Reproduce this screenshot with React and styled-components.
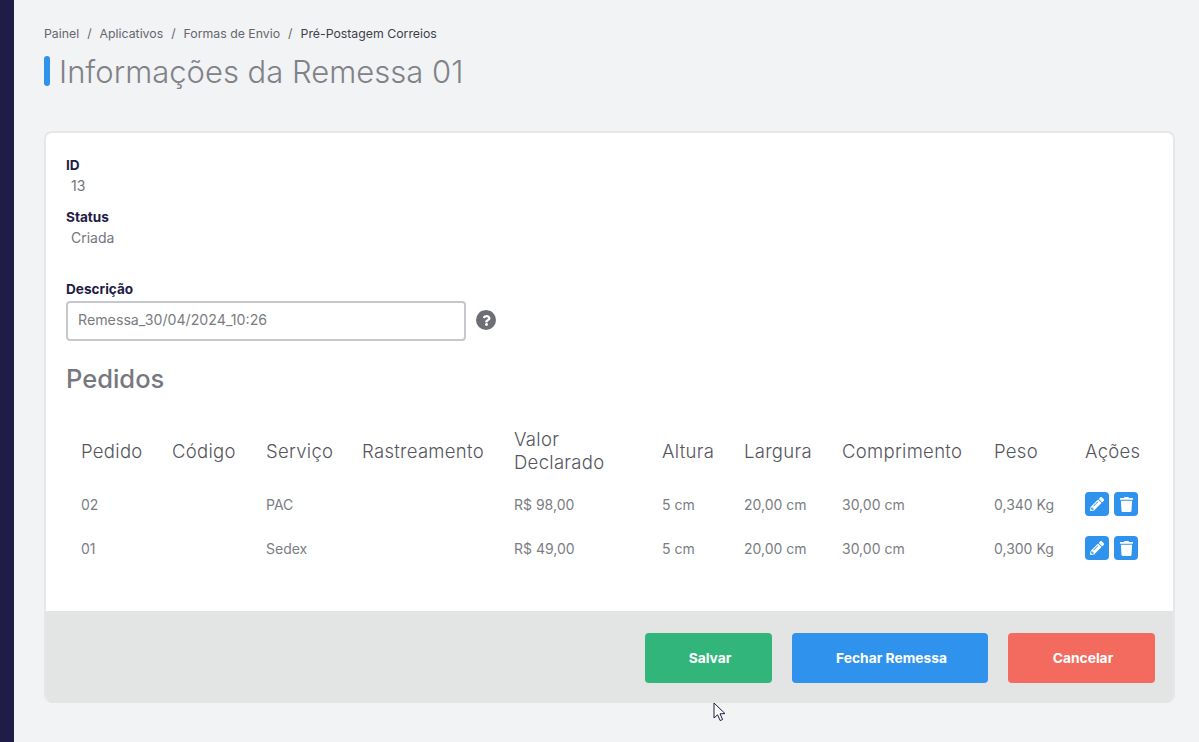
import styled, {createGlobalStyle} from 'styled-components';
import {FaPencilAlt, FaTrash, FaQuestion} from 'react-icons/fa';

const GlobalStyle = createGlobalStyle`
    html, body {
        margin: 0;
        padding: 0;
        background: #f2f3f5;
        font-family: "Inter", "Liberation Sans", sans-serif;
    }
`;

const columns = [
    {label: 'Pedido', width: 91},
    {label: 'Código', width: 94},
    {label: 'Serviço', width: 96},
    {label: 'Rastreamento', width: 152},
    {label: 'Valor Declarado', width: 148},
    {label: 'Altura', width: 82},
    {label: 'Largura', width: 98},
    {label: 'Comprimento', width: 152},
    {label: 'Peso', width: 91},
    {label: 'Ações', width: 83},
];

const orders = [
    {id: '02', service: 'PAC', value: 'R$ 98,00', height: '5 cm', width: '20,00 cm', length: '30,00 cm', weight: '0,340 Kg'},
    {id: '01', service: 'Sedex', value: 'R$ 49,00', height: '5 cm', width: '20,00 cm', length: '30,00 cm', weight: '0,300 Kg'},
];

export default function App() {
    return (
        <Page>
            <GlobalStyle/>
            <Sidebar/>
            <Main>
                <Breadcrumb>
                    <span>Painel</span>
                    <Slash>/</Slash>
                    <span>Aplicativos</span>
                    <Slash>/</Slash>
                    <span>Formas de Envio</span>
                    <Slash>/</Slash>
                    <Current>Pré-Postagem Correios</Current>
                </Breadcrumb>
                <Title>Informações da Remessa 01</Title>

                <Card>
                    <CardBody>
                        <Label>ID</Label>
                        <Value>13</Value>
                        <Label>Status</Label>
                        <Value>Criada</Value>

                        <FieldLabel>Descrição</FieldLabel>
                        <FieldRow>
                            <Input defaultValue="Remessa_30/04/2024_10:26"/>
                            <Help><FaQuestion size={11}/></Help>
                        </FieldRow>

                        <SectionTitle>Pedidos</SectionTitle>

                        <Table>
                            <colgroup>
                                {columns.map((c) => <col key={c.label} width={c.width}/>)}
                            </colgroup>
                            <thead>
                            <tr>
                                {columns.map((c) => <Th key={c.label}>{c.label}</Th>)}
                            </tr>
                            </thead>
                            <tbody>
                            {orders.map((o) => (
                                <tr key={o.id}>
                                    <Td>{o.id}</Td>
                                    <Td/>
                                    <Td>{o.service}</Td>
                                    <Td/>
                                    <Td>{o.value}</Td>
                                    <Td>{o.height}</Td>
                                    <Td>{o.width}</Td>
                                    <Td>{o.length}</Td>
                                    <Td>{o.weight}</Td>
                                    <Td>
                                        <Actions>
                                            <IconButton><FaPencilAlt size={14}/></IconButton>
                                            <IconButton><FaTrash size={15}/></IconButton>
                                        </Actions>
                                    </Td>
                                </tr>
                            ))}
                            </tbody>
                        </Table>
                    </CardBody>

                    <Footer>
                        <Button $color="#31b57b" $width={127}>Salvar</Button>
                        <Button $color="#2f93ee" $width={196}>Fechar Remessa</Button>
                        <Button $color="#f36b5f" $width={147}>Cancelar</Button>
                    </Footer>
                </Card>
            </Main>

            <Cursor width="14" height="20" viewBox="0 0 14 20">
                <path d="M1 1 L1 16 L4.6 12.8 L7.2 18.6 L9.6 17.5 L7 11.8 L12 11.6 Z" fill="#fff" stroke="#1f1d47" strokeWidth="1"/>
            </Cursor>
        </Page>
    );
}

const Page = styled.div`
    display: flex;
    height: 742px;
    overflow: hidden;
    position: relative;
    background: #f2f3f5;
`;

const Sidebar = styled.div`
    width: 14px;
    flex: none;
    background: #1f1d47;
`;

const Main = styled.div`
    flex: 1;
    padding: 26px 24px 0 30px;
`;

const Breadcrumb = styled.div`
    display: flex;
    align-items: center;
    height: 15px;
    font-size: 12.3px;
    color: #65666e;
`;

const Slash = styled.span`
    margin: 0 8px;
`;

const Current = styled.span`
    color: #3f3f4a;
`;

const Title = styled.h1`
    margin: 15px 0 0;
    height: 30px;
    line-height: 32px;
    padding-left: 15px;
    position: relative;
    font-size: 31px;
    font-weight: 300;
    color: #808288;

    &::before {
        content: '';
        position: absolute;
        left: 0;
        top: 0;
        width: 6px;
        height: 30px;
        border-radius: 3px;
        background: #2f93ee;
    }
`;

const Card = styled.div`
    margin-top: 45px;
    height: 572px;
    box-sizing: border-box;
    border: 2px solid #e6e7e9;
    border-bottom: 0;
    border-radius: 8px;
    background: #fff;
    display: flex;
    flex-direction: column;
    overflow: hidden;
`;

const CardBody = styled.div`
    flex: 1;
    padding: 24px 20px 0;
`;

const Label = styled.div`
    height: 16px;
    line-height: 16px;
    font-size: 13.6px;
    font-weight: 700;
    color: #1f1d47;
`;

const Value = styled.div`
    height: 36px;
    padding: 2px 0 0 5px;
    box-sizing: border-box;
    line-height: 22px;
    font-size: 14px;
    color: #73767e;
`;

const FieldLabel = styled(Label)`
    margin-top: 20px;
`;

const FieldRow = styled.div`
    display: flex;
    align-items: center;
    gap: 10px;
    margin-top: 4px;
`;

const Input = styled.input`
    width: 400px;
    height: 40px;
    box-sizing: border-box;
    border: 2px solid #c6c8cb;
    border-radius: 4px;
    padding: 0 10px 3px;
    outline: 0;
    font-family: inherit;
    font-size: 14.2px;
    color: #7a7c82;
`;

const Help = styled.span`
    width: 20px;
    height: 20px;
    margin-bottom: 2px;
    border-radius: 50%;
    display: flex;
    align-items: center;
    justify-content: center;
    background: #6d6e76;
    color: #fff;
`;

const SectionTitle = styled.h2`
    margin: 23px 0 0;
    height: 30px;
    line-height: 30px;
    font-size: 25.5px;
    font-weight: 500;
    color: #77787f;
`;

const Table = styled.table`
    margin-top: 25px;
    width: 1087px;
    table-layout: fixed;
    border-collapse: collapse;
`;

const Th = styled.th`
    height: 62px;
    padding: 1px 15px 0;
    text-align: left;
    font-size: 18.5px;
    letter-spacing: 0.3px;
    line-height: 23px;
    font-weight: 300;
    color: #55565e;
`;

const Td = styled.td`
    height: 44px;
    padding: 0 15px;
    font-size: 14px;
    color: #7b7d84;
`;

const Actions = styled.div`
    display: flex;
    gap: 5px;
`;

const IconButton = styled.button`
    width: 24px;
    height: 24px;
    padding: 0;
    border: 0;
    border-radius: 4px;
    display: flex;
    align-items: center;
    justify-content: center;
    background: #2f93ee;
    color: #fff;
`;

const Footer = styled.div`
    height: 92px;
    flex: none;
    display: flex;
    justify-content: flex-end;
    align-items: flex-start;
    gap: 20px;
    padding: 22px 18px 0 0;
    box-sizing: border-box;
    background: #e3e5e4;
`;

const Button = styled.button`
    width: ${(p) => p.$width}px;
    height: 50px;
    padding: 0 0 0 3px;
    border: 0;
    border-radius: 4px;
    background: ${(p) => p.$color};
    color: #fff;
    font-family: inherit;
    font-size: 13.8px;
    font-weight: 700;
`;

const Cursor = styled.svg`
    position: absolute;
    left: 713px;
    top: 702px;
`;
